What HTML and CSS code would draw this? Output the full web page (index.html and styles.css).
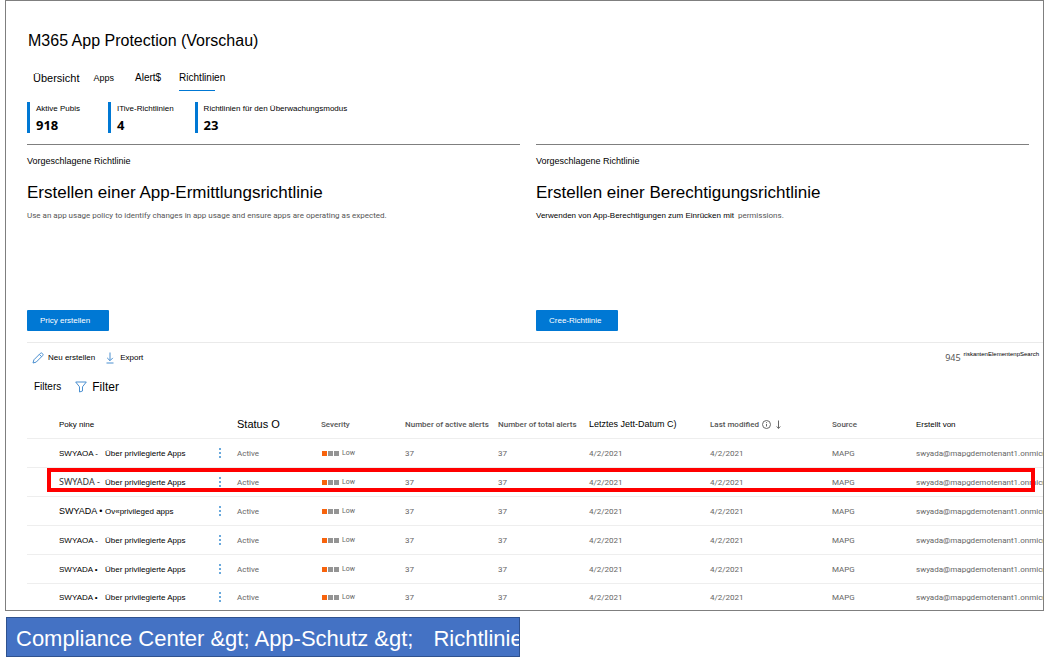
FILE: index.html
```
<!DOCTYPE html>
<html lang="de">
<head>
<meta charset="utf-8">
<title>M365 App Protection</title>
<link rel="stylesheet" href="styles.css">
</head>
<body>
<main class="frame">
  <header class="top">
    <h1 class="title">M365 App Protection (Vorschau)</h1>
    <nav class="tabs">
      <a class="tab tab-large" href="#overview">Übersicht</a>
      <a class="tab tab-small" href="#apps">Apps</a>
      <a class="tab" href="#alerts">Alert$</a>
      <a class="tab tab-active" href="#policies" aria-current="page">Richtlinien</a>
    </nav>
    <section class="stats">
      <div class="stat"><span class="stat-label">Aktive Pubis</span><strong class="stat-value">918</strong></div>
      <div class="stat"><span class="stat-label">ITive-Richtlinien</span><strong class="stat-value">4</strong></div>
      <div class="stat"><span class="stat-label">Richtlinien für den Überwachungsmodus</span><strong class="stat-value">23</strong></div>
    </section>
  </header>

  <section class="cards">
    <article class="card">
      <p class="card-kicker">Vorgeschlagene Richtlinie</p>
      <h2 class="card-title">Erstellen einer App-Ermittlungsrichtlinie</h2>
      <p class="card-text"><span class="ui">Use an app usage policy to identify changes in app usage and ensure apps are operating as expected.</span></p>
      <button class="primary" type="button">Pricy erstellen</button>
    </article>
    <article class="card">
      <p class="card-kicker">Vorgeschlagene Richtlinie</p>
      <h2 class="card-title">Erstellen einer Berechtigungsrichtlinie</h2>
      <p class="card-text"><span>Verwenden von App-Berechtigungen zum Einrücken mit</span><span class="ui">permissions.</span></p>
      <button class="primary" type="button">Cree-Richtlinie</button>
    </article>
  </section>

  <section class="list">
    <div class="toolbar">
      <button class="tool" type="button">
        <svg class="icon" viewBox="0 0 12 12"><path d="M1 11l.9-3.200L8.300 1.400a1.400 1.400 0 0 1 2 0l.3.3a1.400 1.400 0 0 1 0 2L4.200 10.100z M7.300 2.400l2.300 2.300"/></svg>
        <span>Neu erstellen</span>
      </button>
      <button class="tool" type="button">
        <svg class="icon" viewBox="0 0 12 12"><path d="M6 .5v8 M3.200 5.900L6 8.700l2.800-2.800 M2.500 11h7"/></svg>
        <span>Export</span>
      </button>
      <p class="count"><span class="count-number">945</span><span class="count-note">riskantenElementenpSearch</span></p>
    </div>
    <div class="filters">
      <span class="filters-label">Filters</span>
      <button class="filter" type="button">
        <svg class="icon" viewBox="0 0 12 12"><path d="M.7 1h10.600L7.500 5.800V10L4.500 11V5.800z"/></svg>
        <span>Filter</span>
      </button>
    </div>
    <table class="grid">
      <colgroup>
        <col class="c-name"><col class="c-menu"><col class="c-status"><col class="c-severity"><col class="c-active"><col class="c-total"><col class="c-date"><col class="c-modified"><col class="c-source"><col>
      </colgroup>
      <thead>
        <tr>
          <th class="name-head">Poky nine</th>
          <th></th>
          <th class="head-status">Status O</th>
          <th class="ui">Severity</th>
          <th class="ui">Number of active alerts</th>
          <th class="ui">Number of total alerts</th>
          <th class="head-date">Letztes Jett-Datum C)</th>
          <th class="ui"><span class="sort">Last modified
            <svg class="info" viewBox="0 0 9 9"><circle cx="4.500" cy="4.500" r="4"/><path d="M4.500 4v2.500M4.500 2.200v.9"/></svg>
            <svg class="arrow" viewBox="0 0 5 9"><path d="M2.500 .5v8M.7 6.500l1.800 1.900 1.800-1.900"/></svg></span></th>
          <th class="ui">Source</th>
          <th class="head-created">Erstellt von</th>
        </tr>
      </thead>
      <tbody>
        <tr>
          <td><div class="name"><span class="code">SWYAOA -</span><span>Über privilegierte Apps</span></div></td>
          <td><button class="more" type="button" aria-label="Mehr"><i></i><i></i><i></i></button></td>
          <td>Active</td>
          <td><span class="severity"><i></i><i></i><i></i>Low</span></td>
          <td>37</td><td>37</td><td>4/2/2021</td><td>4/2/2021</td><td>MAPG</td><td>swyada@mapgdemotenant1.onmicr</td>
        </tr>
        <tr class="marked">
          <td><div class="name"><span class="code code-ui">SWYADA -</span><span>Über privilegierte Apps</span></div></td>
          <td><button class="more" type="button" aria-label="Mehr"><i></i><i></i><i></i></button></td>
          <td>Active</td>
          <td><span class="severity"><i></i><i></i><i></i>Low</span></td>
          <td>37</td><td>37</td><td>4/2/2021</td><td>4/2/2021</td><td>MAPG</td><td>swyada@mapgdemotenant1.onmicr</td>
        </tr>
        <tr>
          <td><div class="name"><span class="code code-large">SWYADA •</span><span>Ov«privileged apps</span></div></td>
          <td><button class="more" type="button" aria-label="Mehr"><i></i><i></i><i></i></button></td>
          <td>Active</td>
          <td><span class="severity"><i></i><i></i><i></i>Low</span></td>
          <td>37</td><td>37</td><td>4/2/2021</td><td>4/2/2021</td><td>MAPG</td><td>swyada@mapgdemotenant1.onmicr</td>
        </tr>
        <tr>
          <td><div class="name"><span class="code">SWYAOA -</span><span>Über privilegierte Apps</span></div></td>
          <td><button class="more" type="button" aria-label="Mehr"><i></i><i></i><i></i></button></td>
          <td>Active</td>
          <td><span class="severity"><i></i><i></i><i></i>Low</span></td>
          <td>37</td><td>37</td><td>4/2/2021</td><td>4/2/2021</td><td>MAPG</td><td>swyada@mapgdemotenant1.onmicr</td>
        </tr>
        <tr>
          <td><div class="name"><span class="code">SWYADA •</span><span>Über privilegierte Apps</span></div></td>
          <td><button class="more" type="button" aria-label="Mehr"><i></i><i></i><i></i></button></td>
          <td>Active</td>
          <td><span class="severity"><i></i><i></i><i></i>Low</span></td>
          <td>37</td><td>37</td><td>4/2/2021</td><td>4/2/2021</td><td>MAPG</td><td>swyada@mapgdemotenant1.onmicr</td>
        </tr>
        <tr>
          <td><div class="name"><span class="code">SWYADA •</span><span>Über privilegierte Apps</span></div></td>
          <td><button class="more" type="button" aria-label="Mehr"><i></i><i></i><i></i></button></td>
          <td>Active</td>
          <td><span class="severity"><i></i><i></i><i></i>Low</span></td>
          <td>37</td><td>37</td><td>4/2/2021</td><td>4/2/2021</td><td>MAPG</td><td>swyada@mapgdemotenant1.onmicr</td>
        </tr>
      </tbody>
    </table>
  </section>
</main>
<footer class="path"><span>Compliance Center &amp;gt; App-Schutz &amp;gt;</span><span>Richtlinien</span></footer>
</body>
</html>
```
FILE: styles.css
```
* {
  box-sizing: border-box;
}

body {
  margin: 0;
  background: #fff;
  color: #000;
  font-family: "Liberation Sans", Arial, sans-serif;
  font-size: 8px;
}

h1, h2, p {
  margin: 0;
  font-weight: 400;
}

button {
  padding: 0;
  border: 0;
  background: none;
  color: inherit;
  font: inherit;
}

.ui {
  color: #555;
  font-family: Roboto, "Noto Sans", sans-serif;
}

.frame {
  margin: 0 0 0 5px;
  padding-left: 21px;
  border: 1px solid #7f7f7f;
  overflow: hidden;
}

.title {
  margin-top: 30px;
  padding-left: 1px;
  font-size: 16px;
  line-height: 20px;
}

.tabs {
  display: flex;
  align-items: center;
  margin-top: 19px;
  padding-left: 6px;
  font-size: 10px;
  line-height: 16px;
}

.tab {
  margin-right: 18px;
  color: inherit;
  text-decoration: none;
}

.tab-large {
  margin-right: 14px;
  font-size: 11px;
}

.tab-small {
  margin-right: 21px;
  font-size: 9px;
}

.tab-active {
  position: relative;
}

.tab-active::after {
  content: "";
  position: absolute;
  top: 20px;
  left: 0;
  width: 36px;
  height: 1px;
  background: #0078d4;
}

.stats {
  display: flex;
  gap: 21px;
  margin-top: 16px;
}

.stat {
  display: flex;
  flex-direction: column;
  min-width: 60px;
  height: 31px;
  padding-left: 6px;
  border-left: 3px solid #0078d4;
}

.stat-label {
  line-height: 13px;
}

.stat-value {
  font: 700 13px/20px "Open Sans", "Noto Sans", sans-serif;
}

.cards {
  display: grid;
  grid-template-columns: 1fr 1fr;
  gap: 16px;
  margin: 11px 14px 0 0;
}

.card {
  display: flex;
  flex-direction: column;
  align-items: flex-start;
  min-height: 187px;
  padding-top: 10px;
  border-top: 1px solid #7f7f7f;
}

.card-kicker {
  font-size: 9px;
  line-height: 12px;
}

.card-title {
  margin-top: 16px;
  font-size: 17px;
  line-height: 20px;
}

.card-text {
  display: flex;
  gap: 4px;
  margin-top: 6px;
  line-height: 14px;
}

.primary {
  min-width: 82px;
  margin-top: auto;
  padding: 0 13px;
  border-radius: 1px;
  background: #0078d4;
  color: #fff;
  line-height: 21px;
  text-align: left;
}

.list {
  margin-top: 11px;
  border-top: 1px solid #eaeaea;
}

.icon {
  width: 12px;
  height: 12px;
  fill: none;
  stroke: #4a8fd0;
  stroke-width: 1;
}

.toolbar {
  display: flex;
  align-items: center;
  gap: 9px;
  padding: 7px 4px 0 5px;
  line-height: 16px;
}

.tool {
  display: flex;
  align-items: center;
  gap: 4px;
}

.count {
  display: flex;
  align-items: flex-start;
  gap: 3px;
  margin-left: auto;
}

.count-number {
  color: #555;
  font-family: "Noto Sans", "Open Sans", sans-serif;
  font-size: 9px;
}

.count-note {
  font-size: 6px;
  line-height: 8px;
}

.filters {
  display: flex;
  align-items: center;
  gap: 14px;
  margin-top: 13px;
  padding-left: 7px;
  font-size: 10px;
  line-height: 16px;
}

.filter {
  display: flex;
  align-items: center;
  gap: 5px;
  font-size: 12px;
}

.grid {
  width: 100%;
  margin-top: 15px;
  border-collapse: separate;
  border-spacing: 0;
  table-layout: fixed;
  white-space: nowrap;
}

.c-name { width: 191px; }
.c-menu { width: 19px; }
.c-status { width: 84px; }
.c-severity { width: 84px; }
.c-active { width: 93px; }
.c-total { width: 91px; }
.c-date { width: 121px; }
.c-modified { width: 122px; }
.c-source { width: 84px; }

th, td {
  height: 29px;
  padding: 0;
  border-bottom: 1px solid #eee;
  text-align: left;
  vertical-align: middle;
}

th {
  font-weight: 400;
}

th.ui {
  font-weight: 500;
}

td {
  color: #666;
  font-family: Roboto, "Noto Sans", sans-serif;
}

tbody tr:last-child td {
  height: 26px;
  border-bottom: 0;
}

.name-head {
  padding-left: 32px;
}

.head-status {
  font-size: 11px;
}

.head-date {
  font-size: 9px;
}

.sort {
  display: flex;
  align-items: center;
  gap: 3px;
}

.info, .arrow {
  width: 9px;
  height: 9px;
  fill: none;
  stroke: #666;
  stroke-width: 1;
}

.arrow {
  width: 5px;
  margin-left: 2px;
}

.name {
  display: flex;
  align-items: center;
  padding-left: 32px;
  color: #000;
  font-family: "Liberation Sans", Arial, sans-serif;
}

.code {
  width: 46px;
}

.code-ui {
  color: #333;
  font-family: "Noto Sans", "Open Sans", sans-serif;
  font-size: 9px;
  line-height: 10px;
}

.code-large {
  font-size: 9px;
}

.more {
  display: flex;
  flex-direction: column;
  gap: 2px;
  padding: 2px 1px;
}

.more i {
  width: 2px;
  height: 2px;
  background: #6aa9dc;
}

.severity {
  display: flex;
  align-items: center;
  gap: 1px;
  padding-left: 1px;
  font-size: 7px;
}

.severity i {
  width: 5px;
  height: 5px;
  background: #949494;
}

.severity i:first-child {
  background: #f7630c;
}

.severity i:last-of-type {
  margin-right: 2px;
}

.marked {
  position: relative;
}

.marked td:first-child::after {
  content: "";
  position: absolute;
  top: 0;
  right: 8px;
  bottom: 5px;
  left: 20px;
  border: 4px solid #f00;
}

.path {
  display: flex;
  gap: 20px;
  width: 514px;
  max-width: 100%;
  margin: 6px 0 0 6px;
  padding-left: 9px;
  border: 1px solid #2f528f;
  background: #4472c4;
  color: #fff;
  font-size: 22px;
  line-height: 42px;
  height: 40px;
  white-space: nowrap;
  overflow: hidden;
}
```
